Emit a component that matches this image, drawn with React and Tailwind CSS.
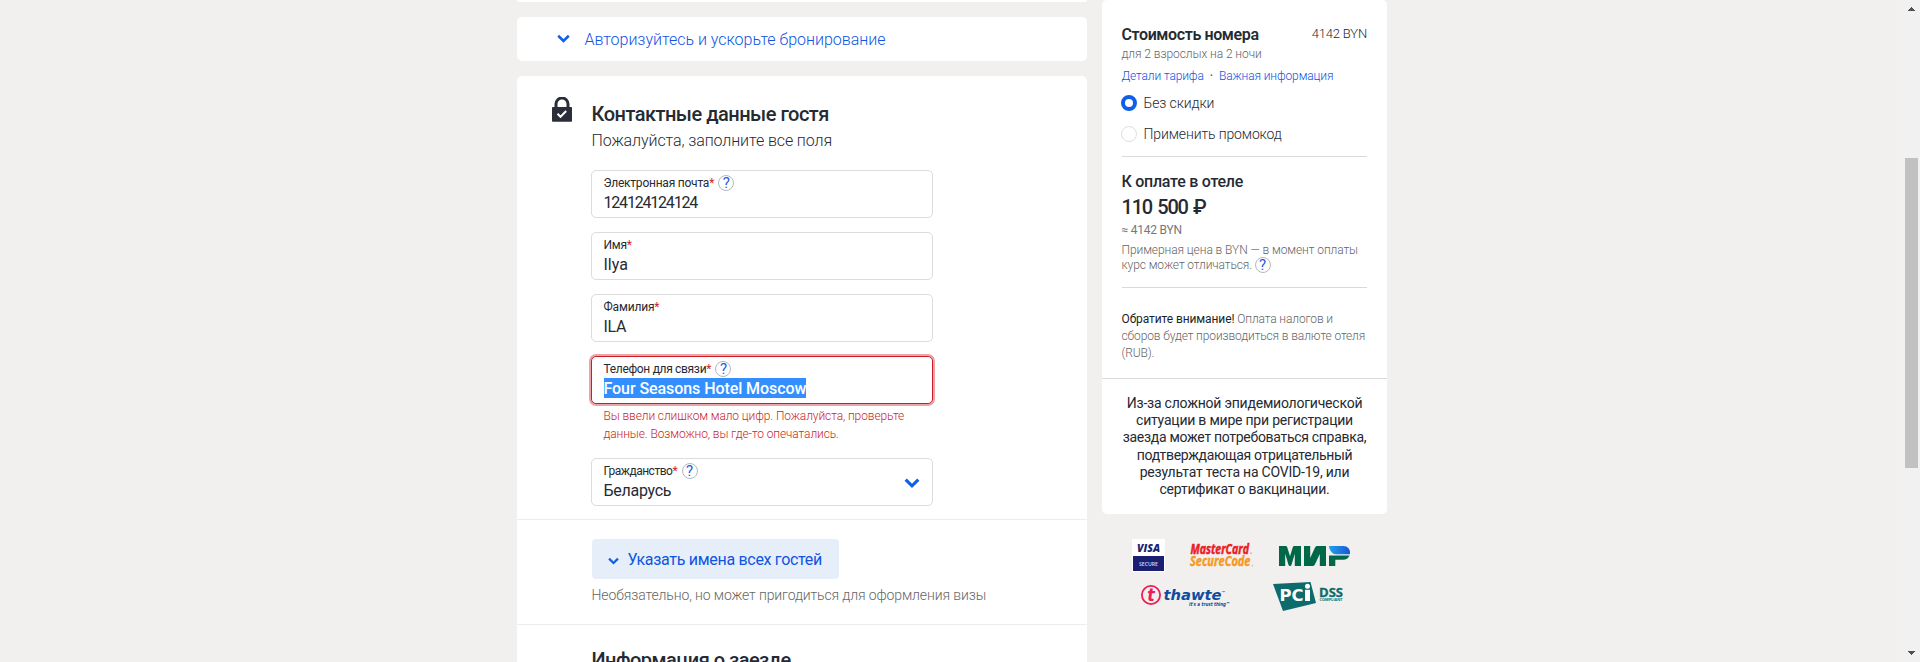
import React from "react";

const Chevron = ({ className }) => (
  <svg viewBox="0 0 14 9" className={className} fill="none" stroke="#0f5fe8" strokeWidth="2.8">
    <path d="M1.3 1.5 7 7l5.7-5.5" />
  </svg>
);

const Help = () => (
  <span className="inline-flex h-4 w-4 shrink-0 items-center justify-center rounded-full border border-[#b4b8bd] text-[15px] leading-4 text-[#1f5be6]">
    ?
  </span>
);

const Lock = () => (
  <svg viewBox="0 0 20 25" className="mt-[21px] ml-[35px] h-[25px] w-5 shrink-0">
    <path d="M4 11V7a6 6 0 0 1 12 0v4" fill="none" stroke="#2b2e38" strokeWidth="3" />
    <rect x="0" y="10" width="20" height="14.7" rx="0.8" fill="#2b2e38" />
    <path d="m5.5 16.8 3 3 5.7-5.8" fill="none" stroke="#fff" strokeWidth="2" />
  </svg>
);

function Field({ label, track, help, error, select, children }) {
  return (
    <div
      className={
        "flex h-12 w-[342px] rounded-[5px] border bg-white pt-1 pl-[11.5px] " +
        (error ? "border-[#cb1f27] shadow-[0_0_0_2px_#eba5a8]" : "border-[#dcdcdc]")
      }
    >
      <div className="flex-1">
        <div className="flex h-4 items-center text-[12px] leading-4">
          <span className={track}>{label}</span>
          <span className="mr-[4px] text-[#d3222a]">*</span>
          {help && <Help />}
        </div>
        <div className="mt-px flex h-5 text-[16px] leading-[21px]">{children}</div>
      </div>
      {select && <Chevron className="mt-[15px] mr-[12px] h-[10px] w-[16px]" />}
    </div>
  );
}

const Radio = ({ checked, children }) => (
  <div className="flex h-4 items-center gap-[6.5px] text-[14px] leading-4 font-light tracking-[-0.12px]">
    <span
      className={
        "-ml-px h-4 w-4 rounded-full bg-white " +
        (checked ? "border-[4px] border-[#0f5fe8]" : "border border-[#dfdfdf]")
      }
    />
    {children}
  </div>
);

function Logos() {
  return (
    <div className="flex flex-col pl-[30px]">
      <div className="flex h-[33px] items-start">
        <svg className="h-[33px] w-[33px] overflow-visible" viewBox="0 0 33 33">
          <rect width="33" height="33" fill="#fff" />
          <rect x="1" y="17" width="31" height="15" fill="#1a1f71" />
          <text x="5" y="12.5" textLength="23" lengthAdjust="spacingAndGlyphs" fontSize="11" fontWeight="800" fontStyle="italic" fontFamily="Open Sans, sans-serif" fill="#1a1f71">VISA</text>
          <text x="7" y="27.2" textLength="19" lengthAdjust="spacingAndGlyphs" fontSize="5.8" fontWeight="600" fontFamily="Open Sans, sans-serif" fill="#dcdcf0">SECURE</text>
        </svg>
        <svg className="ml-[25px] h-[33px] w-[64px] overflow-visible" viewBox="0 0 64 33" fontFamily="Open Sans, sans-serif" fontStyle="italic" fontWeight="700">
          <text x="0.5" y="14.7" textLength="58.5" lengthAdjust="spacingAndGlyphs" fontSize="13.4" fill="#eb1c24" stroke="#eb1c24" strokeWidth="0.5">MasterCard</text>
          <text x="0" y="27.4" textLength="60.5" lengthAdjust="spacingAndGlyphs" fontSize="13.4" fill="#f7981d" stroke="#f7981d" strokeWidth="0.4">SecureCode</text>
          <circle cx="61" cy="14" r="0.6" fill="#eb1c24" />
          <circle cx="62.3" cy="26.7" r="0.6" fill="#f7981d" />
        </svg>
        <svg className="mt-[7px] ml-[25px] h-5 w-[72px]" viewBox="0 0 72 20">
          <g fill="#006848">
            <path d="M0 0h6.6c1 0 1.4.6 1.7 1.5L11 10.2l2.7-8.7C14 .6 14.5 0 15.4 0H22v20h-6.2V7.8L12.6 18.4C12.2 19.6 11.8 20 11 20s-1.2-.4-1.6-1.6L6.2 7.8V20H0z" />
            <path d="M25 0h6.2v12l4.700-10.2C36.5.6 37.2 0 38.4 0H47v20h-6.2V8L36 18.2c-.6 1.2-1.3 1.8-2.5 1.8H25z" />
            <path d="M50 9.5h20.500c-.9 2.7-3.5 4.3-6.5 4.3h-7.7V20H50z" />
          </g>
          <path d="M50 0h14.5c4 0 6.5 3 6.5 6.5 0 .7 0 1.2-.2 1.8H57C53.300 8.300 50.400 4.500 50 0z" fill="url(#mirBlue)" />
          <defs>
            <linearGradient id="mirBlue">
              <stop offset="0" stopColor="#22a0ea" />
              <stop offset="1" stopColor="#1558d6" />
            </linearGradient>
          </defs>
        </svg>
      </div>
      <div className="mt-[9px] flex h-8 items-start">
        <svg className="ml-[8px] h-8 w-[92px] overflow-visible" viewBox="0 0 92 32">
          <circle cx="11" cy="14" r="9.1" fill="none" stroke="#ee1c57" strokeWidth="1.8" />
          <text x="7.3" y="19.5" fontSize="17" fontWeight="700" fontStyle="italic" fontFamily="DejaVu Sans, sans-serif" textLength="7.5" lengthAdjust="spacingAndGlyphs" fill="#ee1c57">t</text>
          <text x="23.5" y="19.200" fontSize="14.5" fontWeight="700" fontStyle="italic" fontFamily="DejaVu Sans, sans-serif" textLength="58" lengthAdjust="spacingAndGlyphs" fill="#0d4ca1">thawte</text>
          <text x="81.5" y="13" fontSize="4" fontWeight="700" fontFamily="DejaVu Sans, sans-serif" fill="#0d4ca1">™</text>
          <text x="49" y="25.2" fontSize="5.4" fontWeight="700" fontStyle="italic" fontFamily="DejaVu Sans, sans-serif" textLength="41" lengthAdjust="spacingAndGlyphs" fill="#0d4ca1">it's a trust thing™</text>
        </svg>
        <svg className="ml-[41px] h-8 w-[72px] overflow-visible" viewBox="0 0 72 32">
          <path d="M0 3 37.500 1l5.500 21-33 8z" fill="#0e6b6b" />
          <text x="6.500" y="19.800" fontSize="16.500" fontWeight="700" fontFamily="DejaVu Sans, sans-serif" textLength="24" lengthAdjust="spacingAndGlyphs" fill="#fff">PC</text>
          <path d="M32 8.800h5V20h-5z" fill="#fff" />
          <circle cx="34.500" cy="5.300" r="2.500" fill="#fff" />
          <text x="46" y="15.500" fontSize="12.500" fontWeight="700" fontFamily="Open Sans, sans-serif" textLength="24" lengthAdjust="spacingAndGlyphs" fill="#0e6b6b" stroke="#0e6b6b" strokeWidth="0.300">DSS</text>
          <text x="46.500" y="20" fontSize="4.200" fontWeight="700" fontFamily="Open Sans, sans-serif" textLength="23" lengthAdjust="spacingAndGlyphs" fill="#0e6b6b">COMPLIANT</text>
        </svg>
      </div>
    </div>
  );
}

export default function App() {
  return (
    <div className="flex h-[662px] w-[1920px] overflow-hidden bg-[#f1f0ee] font-[Roboto,sans-serif] text-[#262a33]">
      <div className="flex flex-1 pl-[517px]">
        <main className="flex w-[570px] shrink-0 flex-col">
          <div className="h-[2px] shrink-0 rounded-b-[2px] bg-white" />
          <div className="mt-[15px] flex h-11 shrink-0 items-center rounded-[5px] bg-white pt-[2px] pl-10">
            <Chevron className="-mt-[4px] mr-[14.5px] h-[9px] w-[13px]" />
            <a className="text-[16px] font-light tracking-[-0.02px] text-[#0f54e2]">Авторизуйтесь и ускорьте бронирование</a>
          </div>

          <div className="mt-[15px] h-[640px] shrink-0 rounded-t-[5px] bg-white">
            <section className="flex h-[444px] border-b border-[#ededed]">
              <Lock />
              <div className="ml-[19.5px] pt-6">
                <h2 className="h-7 text-[20px] leading-7 font-medium tracking-[-0.5px]">Контактные данные гостя</h2>
                <p className="mt-[3px] h-5 text-[16px] leading-5 font-light tracking-[-0.1px]">Пожалуйста, заполните все поля</p>
                <div className="mt-[19px] -ml-[0.5px] flex flex-col gap-[14px]">
                  <Field label="Электронная почта" track="tracking-[-0.23px]" help>
                    <span className="tracking-[-1.2px]">124124124124</span>
                  </Field>
                  <Field label="Имя" track="tracking-[-0.25px]">
                    <span>Ilya</span>
                  </Field>
                  <Field label="Фамилия" track="tracking-[-0.18px]">
                    <span className="tracking-[-0.3px]">ILA</span>
                  </Field>
                  <div>
                    <Field label="Телефон для связи" track="tracking-[-0.32px]" help error>
                      <span className="bg-[#338fff] font-medium tracking-[-0.07px] text-white">Four Seasons Hotel Moscow</span>
                    </Field>
                    <p className="mt-[3px] h-[37px] pl-[12.5px] text-[12px] leading-[18px] font-light tracking-[-0.11px] text-[#cb1f27]">
                      Вы ввели слишком мало цифр. Пожалуйста, проверьте
                      <br />
                      данные. Возможно, вы где-то опечатались.
                    </p>
                  </div>
                  <Field label="Гражданство" track="tracking-[-0.5px]" help select>
                    <span className="tracking-[-0.28px]">Беларусь</span>
                  </Field>
                </div>
              </div>
            </section>

            <section className="h-[105px] border-b border-[#ededed] pt-[19px] pl-[75px]">
              <button className="flex h-10 w-[247px] items-center rounded-[4px] bg-[#e6eff9] pl-4 text-[16px] text-[#0f54e2]">
                <Chevron className="mt-[3px] mr-[8.5px] h-[8px] w-[11px]" />
                <span className="pt-[2px] tracking-[-0.3px]">Указать имена всех гостей</span>
              </button>
              <p className="mt-[6px] -ml-[0.5px] text-[14px] leading-[21px] font-light tracking-[-0.12px] text-[#666]">
                Необязательно, но может пригодиться для оформления визы
              </p>
            </section>

            <section className="pt-[21px] pl-[74.5px]">
              <h2 className="text-[20px] leading-7 font-medium tracking-[-0.53px]">Информация о заезде</h2>
            </section>
          </div>
        </main>

        <aside className="ml-[15px] w-[285px] shrink-0">
          <div className="h-[514px] rounded-[5px] bg-white">
            <div className="h-[379px] border-b border-[#d9d9d9] px-5 pt-6">
              <div className="-ml-[0.5px] flex h-5 justify-between">
                <h3 className="text-[16px] leading-[21px] font-semibold tracking-[-0.38px]">Стоимость номера</h3>
                <span className="text-[13px] leading-[19px] font-light tracking-[-0.17px]">4142 BYN</span>
              </div>
              <p className="mt-[2px] -ml-[0.5px] text-[12px] leading-4 font-light tracking-[-0.07px] text-[#666]">для 2 взрослых на 2 ночи</p>
              <div className="mt-[6px] -ml-[0.5px] flex h-4 text-[12px] leading-4 font-light tracking-[-0.13px] text-[#0f54e2]">
                <a>Детали тарифа</a>
                <span className="mx-[6px] font-medium text-[#666]">·</span>
                <a>Важная информация</a>
              </div>
              <div className="mt-[11px] flex h-[62px] flex-col gap-[15px] border-b border-[#d9d9d9]">
                <Radio checked>Без скидки</Radio>
                <Radio>Применить промокод</Radio>
              </div>
              <div className="h-[131px] border-b border-[#d9d9d9] pt-[15px]">
                <h3 className="-ml-[0.5px] text-[16px] leading-5 font-medium tracking-[-0.26px]">К оплате в отеле</h3>
                <p className="mt-[3px] -ml-[0.5px] text-[20px] leading-[25px] font-medium tracking-[-1.2px] [word-spacing:1.5px]">110 500 ₽</p>
                <p className="mt-[2px] -ml-[0.5px] text-[12px] leading-4 tracking-[-0.23px] text-[#777]">≈ 4142 BYN</p>
                <p className="mt-[4.5px] -ml-[0.5px] text-[12px] leading-[15px] font-light tracking-[-0.08px] text-[#666]">Примерная цена в BYN — в момент оплаты</p>
                <div className="-ml-[0.5px] flex h-[15px] text-[12px] leading-[15px] font-light tracking-[-0.1px] text-[#666]">
                  курс может отличаться.
                  <span className="-mt-px ml-[2.5px] flex font-normal"><Help /></span>
                </div>
              </div>
              <p className="mt-[23px] -ml-[0.5px] text-[12px] leading-[17px] font-light tracking-[-0.12px] whitespace-nowrap text-[#666]">
                <b className="font-normal tracking-[-0.1px] text-[#1c1f27]">Обратите внимание!</b> Оплата налогов и
                <br />
                сборов будет производиться в валюте отеля
                <br />
                (RUB).
              </p>
            </div>
            <p className="pt-4 text-center text-[14px] leading-[17.2px] tracking-[-0.22px]">
              Из-за сложной эпидемиологической
              <br />
              ситуации в мире при регистрации
              <br />
              <span className="tracking-[-0.3px]">заезда может потребоваться справка,</span>
              <br />
              <span className="tracking-[-0.34px]">подтверждающая отрицательный</span>
              <br />
              результат теста на COVID-19, или
              <br />
              сертификат о вакцинации.
            </p>
          </div>
          <div className="pt-[25px]">
            <Logos />
          </div>
        </aside>
      </div>

      <div className="flex w-[17px] shrink-0 flex-col items-center bg-[#f1f1f1]">
        <svg viewBox="0 0 7 4" className="mt-[7px] h-1 w-[7px]" shapeRendering="crispEdges"><path d="M0 4 3.500 0 7 4z" fill="#505050" /></svg>
        <div className="mt-[147px] h-[310px] w-[13px] bg-[#c1c1c1]" />
        <svg viewBox="0 0 7 4" className="mt-[183px] h-1 w-[7px]" shapeRendering="crispEdges"><path d="M0 0h7L3.500 4z" fill="#505050" /></svg>
      </div>
    </div>
  );
}
